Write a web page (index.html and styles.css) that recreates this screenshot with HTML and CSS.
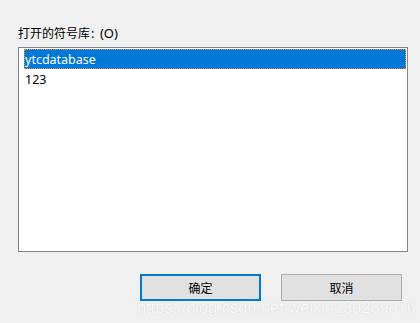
FILE: index.html
```html
<!DOCTYPE html>
<html lang="zh">
<head>
<meta charset="utf-8">
<link rel="stylesheet" href="styles.css">
</head>
<body>
<div class="dialog">
  <div class="label">打开的符号库<span class="latin">: (O)</span></div>
  <div class="listbox">
    <div class="item selected"><span>ytcdatabase</span></div>
    <div class="item"><span>123</span></div>
  </div>
  <div class="buttons">
    <button class="btn default">确定</button>
    <button class="btn">取消</button>
  </div>
</div>
<div class="watermark">https://blog.csdn.net/weixin_39289876</div>
</body>
</html>
```
FILE: styles.css
```css
html, body {
  margin: 0;
  padding: 0;
  background: #f0f0f0;
  width: 420px;
  height: 323px;
  overflow: hidden;
  font-family: "Noto Sans", "Noto Sans CJK SC", sans-serif;
  font-size: 12px;
  color: #000;
}
.dialog {
  display: flex;
  flex-direction: column;
  padding: 24px 18px 0 18px;
}
.label {
  height: 17px;
  line-height: 17px;
  margin-bottom: 6px;
  font-family: "Noto Sans CJK SC", sans-serif;
  font-size: 12px;
}
.label .latin {
  font-family: "Noto Sans", sans-serif;
  font-size: 13px;
  word-spacing: 2px;
  margin-left: 1px;
}
.listbox {
  width: 383px;
  height: 202px;
  border: 1px solid #828790;
  background: #fff;
  padding: 1px 0 0 5px;
  box-sizing: content-box;
}
.item {
  height: 20px;
  line-height: 21px;
  padding-left: 1px;
  font-size: 12.5px;
}
.item.selected {
  background: #0078d7;
  color: #fff;
  outline: 1px dotted #f28a2a;
  outline-offset: -1px;
  margin-right: 1px;
}
.buttons {
  display: flex;
  justify-content: flex-end;
  gap: 20px;
  margin-top: 22px;
}
.btn {
  width: 121px;
  height: 27px;
  box-sizing: border-box;
  background: #e1e1e1;
  border: 1px solid #adadad;
  font-family: "Noto Sans CJK SC", sans-serif;
  font-size: 12px;
  color: #000;
  padding: 0;
  margin: 0;
}
.btn.default {
  border: 2px solid #0078d7;
}
.watermark {
  position: absolute;
  left: 137px;
  top: 298px;
  font-family: "Liberation Sans", Arial, sans-serif;
  font-size: 16.4px;
  color: rgba(255, 255, 255, 0.9);
  text-shadow: 0 0 1px rgba(140, 140, 140, 0.4);
  white-space: nowrap;
}
```
